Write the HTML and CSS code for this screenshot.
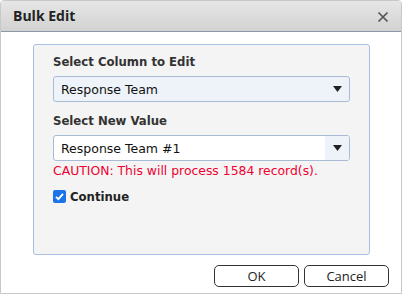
FILE: index.html
```html
<!DOCTYPE html>
<html>
<head>
<meta charset="utf-8">
<link rel="stylesheet" href="styles.css">
</head>
<body>
<div class="dialog">
  <div class="titlebar">
    <span class="title">Bulk Edit</span>
    <svg class="close" width="12" height="12" viewBox="0 0 12 12"><path d="M1.5 1.5 L10.5 10.5 M10.5 1.5 L1.5 10.5" stroke="#555" stroke-width="1.7" fill="none"/></svg>
  </div>
  <div class="content">
    <div class="panel">
      <div class="label">Select Column to Edit</div>
      <div class="select select-a">
        <span class="value">Response Team</span>
        <span class="arrow"><svg width="9" height="6" viewBox="0 0 9 6"><path d="M0 0 H9 L4.5 6 Z" fill="#222"/></svg></span>
      </div>
      <div class="label label-2">Select New Value</div>
      <div class="select select-b">
        <span class="value">Response Team #1</span>
        <span class="arrow arrow-b"><svg width="9" height="6" viewBox="0 0 9 6"><path d="M0 0 H9 L4.5 6 Z" fill="#222"/></svg></span>
      </div>
      <div class="caution">CAUTION: This will process 1584 record(s).</div>
      <label class="check">
        <span class="box"><svg width="13" height="13" viewBox="0 0 13 13"><rect x="0" y="0" width="13" height="13" rx="2" fill="#1a73e8"/><path d="M3 6.8 L5.4 9.2 L10 3.8" stroke="#fff" stroke-width="1.9" fill="none"/></svg></span>
        <span class="check-text">Continue</span>
      </label>
    </div>
  </div>
  <div class="buttons">
    <button class="btn">OK</button>
    <button class="btn">Cancel</button>
  </div>
</div>
</body>
</html>
```
FILE: styles.css
```css
html, body {
  margin: 0;
  padding: 0;
  background: #ffffff;
}
.dialog {
  width: 402px;
  height: 294px;
  box-sizing: border-box;
  border: 1px solid #c8c8c8;
  border-radius: 4px 4px 0 0;
  background: #ffffff;
  display: flex;
  flex-direction: column;
  overflow: hidden;
}
.titlebar {
  height: 31px;
  box-sizing: border-box;
  border-bottom: 1px solid #8d98a8;
  background: linear-gradient(#e6e6e6, #d2d2d2);
  display: flex;
  align-items: center;
  justify-content: space-between;
  padding: 0 12px 0 12px;
}
.title {
  font-family: "Open Sans", sans-serif;
  font-weight: 700;
  font-size: 14px;
  color: #222;
  margin-top: -1px;
}
.close {
  display: block;
  margin-top: 1px;
}
.content {
  padding: 12px 31px 0 32px;
}
.panel {
  height: 211px;
  box-sizing: border-box;
  border: 1px solid #a8c0e0;
  border-radius: 3px;
  background: #f4f4f4;
  padding: 9px 19px 0 19px;
  font-family: "DejaVu Sans", sans-serif;
}
.label {
  font-weight: 700;
  font-size: 13px;
  font-stretch: condensed;
  line-height: 16px;
  color: #333;
  margin-bottom: 6px;
}
.label-2 {
  margin-top: 11px;
}
.select {
  height: 26px;
  box-sizing: border-box;
  border: 1px solid #a8bcd6;
  border-radius: 3px;
  display: flex;
  align-items: center;
  justify-content: space-between;
  font-size: 12.5px;
  color: #111;
  overflow: hidden;
}
.select-a {
  background: #eef3fa;
}
.select-b {
  background: #ffffff;
}
.value {
  padding-left: 7px;
}
.arrow {
  width: 24px;
  height: 100%;
  display: flex;
  align-items: center;
  justify-content: center;
}
.arrow svg {
  display: block;
}
.arrow-b {
  background: #eef3fa;
}
.caution {
  color: #f00030;
  font-size: 12.4px;
  line-height: 16px;
  margin-top: 2px;
}
.check {
  display: flex;
  align-items: center;
  margin-top: 10px;
}
.box svg {
  display: block;
}
.check-text {
  margin-left: 4px;
  font-weight: 700;
  font-size: 13px;
  font-stretch: condensed;
  color: #222;
}
.buttons {
  display: flex;
  justify-content: flex-end;
  gap: 5px;
  padding: 10px 12px 0 0;
}
.btn {
  width: 85px;
  height: 22px;
  box-sizing: border-box;
  border: 1px solid #333;
  border-radius: 5px;
  background: #fff;
  font-family: "Open Sans", sans-serif;
  font-size: 13px;
  color: #222;
  padding: 0;
  line-height: 20px;
}
```
